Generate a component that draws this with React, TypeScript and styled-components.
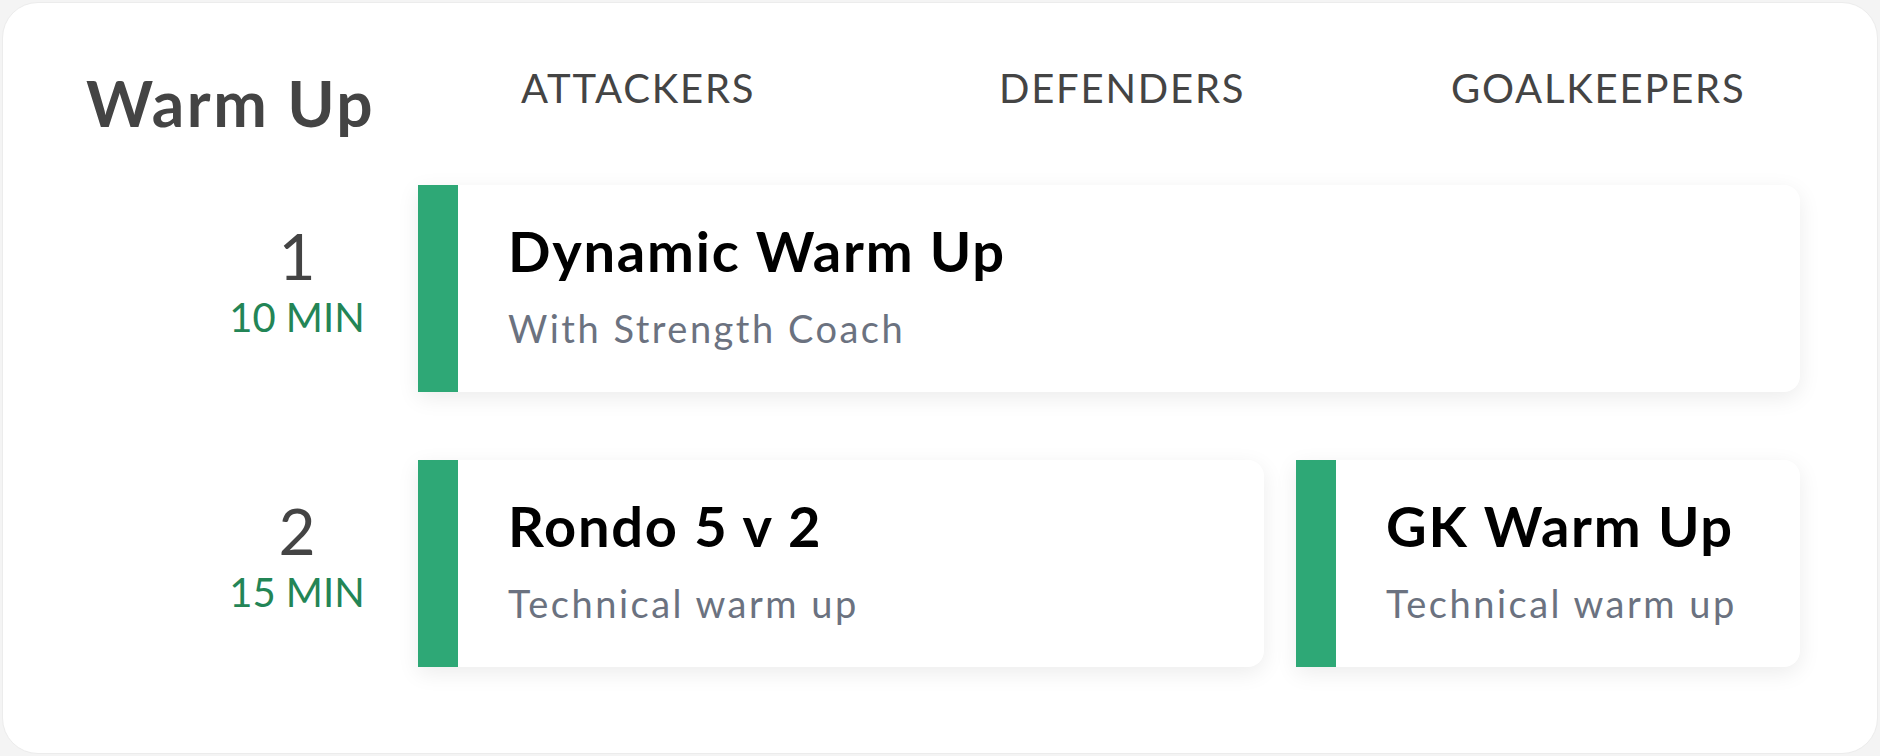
import React from "react";
import styled, { createGlobalStyle } from "styled-components";

const GlobalStyle = createGlobalStyle`
  body {
    margin: 0;
    background: #f4f4f4;
    font-family: Lato, "Open Sans", sans-serif;
  }
`;

const Page = styled.div`
  padding: 2px;
  width: 1880px;
  height: 756px;
  box-sizing: border-box;
`;

const Panel = styled.section`
  box-sizing: border-box;
  height: 752px;
  background: #fff;
  border: 1px solid #ececec;
  border-radius: 36px;
  padding: 65px 77px 0 83px;
  display: flex;
  flex-direction: column;
`;

const HeaderRow = styled.header`
  display: grid;
  grid-template-columns: 332px 1fr;
  align-items: start;
  margin-bottom: 50px;
`;

const Heading = styled.h2`
  margin: 3px 0 0;
  font-size: 64px;
  line-height: 1;
  font-weight: 700;
  color: #444;
  letter-spacing: 2.5px;
`;

const Tabs = styled.nav`
  display: grid;
  grid-template-columns: 478px 452px auto;
  padding-left: 103px;
`;

const Tab = styled.span`
  font-size: 40px;
  line-height: 1;
  font-weight: 400;
  color: #444;
  letter-spacing: 1.8px;
`;

const SlotRow = styled.div`
  display: grid;
  grid-template-columns: 332px 1fr;
  margin-bottom: 68px;
`;

const SlotLabel = styled.div`
  padding: 39px 0 0 90px;
  display: flex;
  flex-direction: column;
  align-items: center;
  gap: 9px;
`;

const SlotNumber = styled.span`
  font-size: 64px;
  line-height: 1;
  color: #444;
`;

const SlotTime = styled.span`
  font-size: 40px;
  line-height: 1;
  color: #238556;
`;

const Cards = styled.div<{ $cols: string }>`
  display: grid;
  grid-template-columns: ${(p) => p.$cols};
  gap: 32px;
`;

const Card = styled.article`
  display: flex;
  background: #fff;
  border-radius: 0 16px 16px 0;
  box-shadow: 0 6px 22px rgba(0, 0, 0, 0.08);
  height: 207px;
`;

const Bar = styled.div`
  width: 40px;
  flex-shrink: 0;
  background: #2ea876;
`;

const CardBody = styled.div`
  padding: 38px 16px 0 50px;
  display: flex;
  flex-direction: column;
  gap: 30px;
`;

const Title = styled.h3`
  margin: 0;
  font-size: 56px;
  line-height: 1;
  font-weight: 700;
  color: #000;
  letter-spacing: 1.8px;
  white-space: nowrap;
`;

const Subtitle = styled.p`
  margin: 0;
  font-size: 38px;
  line-height: 1;
  color: #6b7280;
  letter-spacing: 2.5px;
  white-space: nowrap;
`;

type Drill = { title: string; subtitle: string };

const slots: { n: number; time: string; cols: string; drills: Drill[] }[] = [
  {
    n: 1,
    time: "10 MIN",
    cols: "1fr",
    drills: [{ title: "Dynamic Warm Up", subtitle: "With Strength Coach" }],
  },
  {
    n: 2,
    time: "15 MIN",
    cols: "1fr 504px",
    drills: [
      { title: "Rondo 5 v 2", subtitle: "Technical warm up" },
      { title: "GK Warm Up", subtitle: "Technical warm up" },
    ],
  },
];

export default function App() {
  return (
    <Page>
      <GlobalStyle />
      <Panel>
        <HeaderRow>
          <Heading>Warm Up</Heading>
          <Tabs>
            <Tab>ATTACKERS</Tab>
            <Tab>DEFENDERS</Tab>
            <Tab>GOALKEEPERS</Tab>
          </Tabs>
        </HeaderRow>
        {slots.map((s) => (
          <SlotRow key={s.n}>
            <SlotLabel>
              <SlotNumber>{s.n}</SlotNumber>
              <SlotTime>{s.time}</SlotTime>
            </SlotLabel>
            <Cards $cols={s.cols}>
              {s.drills.map((d) => (
                <Card key={d.title}>
                  <Bar />
                  <CardBody>
                    <Title>{d.title}</Title>
                    <Subtitle>{d.subtitle}</Subtitle>
                  </CardBody>
                </Card>
              ))}
            </Cards>
          </SlotRow>
        ))}
      </Panel>
    </Page>
  );
}
